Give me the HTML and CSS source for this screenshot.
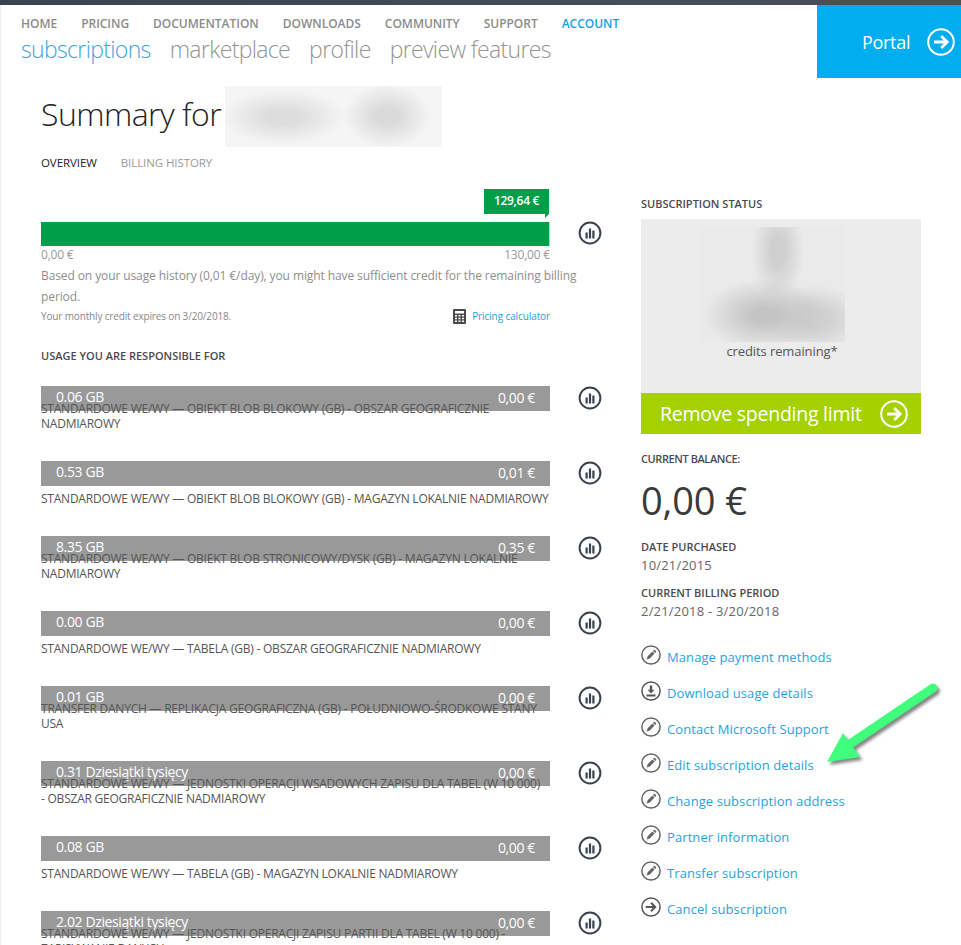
FILE: index.html
```html
<!DOCTYPE html>
<html lang="en">
<head>
<meta charset="utf-8">
<title>Summary</title>
<link rel="stylesheet" href="styles.css">
</head>
<body>
<svg class="defs" width="0" height="0" aria-hidden="true">
  <symbol id="i-chart" viewBox="0 0 24 24">
    <circle cx="12" cy="12" r="10.4" fill="none" stroke="#394250" stroke-width="2"/>
    <path d="M7.5 11.5h2.2v6H7.500zM10.900 7.500h2.200v10h-2.200zM14.300 9.500h2.200v8h-2.200z" fill="#394250"/>
  </symbol>
  <symbol id="i-pencil" viewBox="0 0 20 20">
    <circle cx="10" cy="10" r="9.100" fill="none" stroke="#666" stroke-width="1.500"/>
    <path d="M5.600 14.400l1-3.200 4.800-4.800 2.200 2.200-4.800 4.800zM12 5.800l.8-.8a.8.8 0 0 1 1.100 0l1.100 1.100a.8.8 0 0 1 0 1.100l-.8.800z" fill="#666"/>
  </symbol>
  <symbol id="i-down" viewBox="0 0 20 20">
    <circle cx="10" cy="10" r="9.100" fill="none" stroke="#555" stroke-width="1.500"/>
    <path d="M8.800 4.500h2.400v4.300h2.300L10 12.500 6.500 8.800h2.300zM5.500 13.600h9v1.800h-9z" fill="#555"/>
  </symbol>
  <symbol id="i-go" viewBox="0 0 20 20">
    <circle cx="10" cy="10" r="9.100" fill="none" stroke="#555" stroke-width="1.500"/>
    <path d="M4.800 10h9M10 5.800l4.200 4.200-4.200 4.200" fill="none" stroke="#555" stroke-width="2"/>
  </symbol>
  <symbol id="i-go-white" viewBox="0 0 28 28">
    <circle cx="14" cy="14" r="12.800" fill="none" stroke="#fff" stroke-width="2"/>
    <path d="M7 14h13M14.200 8l6 6-6 6" fill="none" stroke="#fff" stroke-width="2.800"/>
  </symbol>
</svg>

<div class="topbar"></div>

<header class="header">
  <div class="nav-wrap">
    <nav class="nav">
      <a>HOME</a><a>PRICING</a><a>DOCUMENTATION</a><a>DOWNLOADS</a><a>COMMUNITY</a><a>SUPPORT</a><a class="on">ACCOUNT</a>
    </nav>
    <nav class="subnav">
      <a class="on">subscriptions</a><a>marketplace</a><a>profile</a><a>preview features</a>
    </nav>
  </div>
  <a class="portal"><span>Portal</span><svg class="go-white"><use href="#i-go-white"/></svg></a>
</header>

<main class="main">
  <div class="title">
    <h1>Summary for</h1>
    <div class="blur-name"><i></i></div>
  </div>
  <div class="tabs"><a class="on">OVERVIEW</a><a>BILLING HISTORY</a></div>

  <div class="columns">
    <section class="left">
      <div class="flag">129,64 €</div>
      <div class="gauge-row">
        <div class="gauge"></div>
        <svg class="chart"><use href="#i-chart"/></svg>
      </div>
      <div class="scale"><span>0,00 €</span><span>130,00 €</span></div>
      <p class="usage-note">Based on your usage history (0,01 €/day), you might have sufficient credit for the remaining billing period.</p>
      <div class="foot">
        <span class="expires">Your monthly credit expires on 3/20/2018.</span>
        <a class="calc">
          <svg class="calc-icon" viewBox="0 0 13 15"><rect width="13" height="15" rx="1" fill="#4a4a4a"/><path d="M2 2h9v2.500H2zM2 6h2v1.500H2zM5.500 6h2v1.500h-2zM9 6h2v1.500H9zM2 8.800h2v1.500H2zM5.500 8.800h2v1.500h-2zM9 8.800h2v1.500H9zM2 11.600h2v1.500H2zM5.500 11.600h2v1.500h-2zM9 11.600h2v1.500H9z" fill="#fff"/></svg>
          <span>Pricing calculator</span>
        </a>
      </div>
      <h2 class="label usage-head">USAGE YOU ARE RESPONSIBLE FOR</h2>

      <div class="rows">
        <div class="row">
          <div class="row-main">
            <div class="bar"><span>0.06 GB</span><span class="cost">0,00 €</span></div>
            <div class="desc"><p>STANDARDOWE WE/WY — OBIEKT BLOB BLOKOWY (GB) - OBSZAR GEOGRAFICZNIE NADMIAROWY</p></div>
          </div>
          <svg class="chart"><use href="#i-chart"/></svg>
        </div>
        <div class="row">
          <div class="row-main">
            <div class="bar"><span>0.53 GB</span><span class="cost">0,01 €</span></div>
            <div class="desc"><p>STANDARDOWE WE/WY — OBIEKT BLOB BLOKOWY (GB) - MAGAZYN LOKALNIE NADMIAROWY</p></div>
          </div>
          <svg class="chart"><use href="#i-chart"/></svg>
        </div>
        <div class="row">
          <div class="row-main">
            <div class="bar"><span>8.35 GB</span><span class="cost">0,35 €</span></div>
            <div class="desc"><p>STANDARDOWE WE/WY — OBIEKT BLOB STRONICOWY/DYSK (GB) - MAGAZYN LOKALNIE NADMIAROWY</p></div>
          </div>
          <svg class="chart"><use href="#i-chart"/></svg>
        </div>
        <div class="row">
          <div class="row-main">
            <div class="bar"><span>0.00 GB</span><span class="cost">0,00 €</span></div>
            <div class="desc"><p>STANDARDOWE WE/WY — TABELA (GB) - OBSZAR GEOGRAFICZNIE NADMIAROWY</p></div>
          </div>
          <svg class="chart"><use href="#i-chart"/></svg>
        </div>
        <div class="row">
          <div class="row-main">
            <div class="bar"><span>0.01 GB</span><span class="cost">0,00 €</span></div>
            <div class="desc"><p>TRANSFER DANYCH — REPLIKACJA GEOGRAFICZNA (GB) - POŁUDNIOWO-ŚRODKOWE STANY USA</p></div>
          </div>
          <svg class="chart"><use href="#i-chart"/></svg>
        </div>
        <div class="row">
          <div class="row-main">
            <div class="bar"><span>0.31 Dziesiątki tysięcy</span><span class="cost">0,00 €</span></div>
            <div class="desc"><p>STANDARDOWE WE/WY — JEDNOSTKI OPERACJI WSADOWYCH ZAPISU DLA TABEL (W 10 000)<br>- OBSZAR GEOGRAFICZNIE NADMIAROWY</p></div>
          </div>
          <svg class="chart"><use href="#i-chart"/></svg>
        </div>
        <div class="row">
          <div class="row-main">
            <div class="bar"><span>0.08 GB</span><span class="cost">0,00 €</span></div>
            <div class="desc"><p>STANDARDOWE WE/WY — TABELA (GB) - MAGAZYN LOKALNIE NADMIAROWY</p></div>
          </div>
          <svg class="chart"><use href="#i-chart"/></svg>
        </div>
        <div class="row">
          <div class="row-main">
            <div class="bar"><span>2.02 Dziesiątki tysięcy</span><span class="cost">0,00 €</span></div>
            <div class="desc"><p>STANDARDOWE WE/WY — JEDNOSTKI OPERACJI ZAPISU PARTII DLA TABEL (W 10 000) - ZAPISYWANIE DANYCH</p></div>
          </div>
          <svg class="chart"><use href="#i-chart"/></svg>
        </div>
      </div>
    </section>

    <aside class="right">
      <h2 class="label">SUBSCRIPTION STATUS</h2>
      <div class="status">
        <div class="blur-credit"><i></i></div>
        <div class="credits">credits remaining*</div>
      </div>
      <a class="remove"><span>Remove spending limit</span><svg class="go-white"><use href="#i-go-white"/></svg></a>

      <h2 class="label balance-head">CURRENT BALANCE:</h2>
      <div class="amount">0,00 €</div>
      <h2 class="label purchased-head">DATE PURCHASED</h2>
      <div class="value">10/21/2015</div>
      <h2 class="label period-head">CURRENT BILLING PERIOD</h2>
      <div class="value">2/21/2018 - 3/20/2018</div>

      <ul class="actions">
        <li><svg><use href="#i-pencil"/></svg><a>Manage payment methods</a></li>
        <li><svg><use href="#i-down"/></svg><a>Download usage details</a></li>
        <li><svg><use href="#i-pencil"/></svg><a>Contact Microsoft Support</a></li>
        <li><svg><use href="#i-pencil"/></svg><a>Edit subscription details</a></li>
        <li><svg><use href="#i-pencil"/></svg><a>Change subscription address</a></li>
        <li><svg><use href="#i-pencil"/></svg><a>Partner information</a></li>
        <li><svg><use href="#i-pencil"/></svg><a>Transfer subscription</a></li>
        <li><svg><use href="#i-go"/></svg><a>Cancel subscription</a></li>
      </ul>
    </aside>
  </div>
</main>

<svg class="callout" viewBox="0 0 130 100" aria-hidden="true">
  <defs><filter id="soft" x="-20%" y="-20%" width="140%" height="140%"><feGaussianBlur stdDeviation="1.600"/></filter></defs>
  <g transform="translate(2.500 3)" filter="url(#soft)" fill="#555" stroke="#555" opacity=".7">
    <path d="M113 13 L30 69" fill="none" stroke-width="9" stroke-linecap="round"/>
    <path d="M23 58 L40 82 L7 87z" stroke="none"/>
  </g>
  <path d="M113 13 L30 69" fill="none" stroke="#40ff7c" stroke-width="9" stroke-linecap="round"/>
  <path d="M23 58 L40 82 L7 87z" fill="#40ff7c"/>
</svg>
</body>
</html>
```

FILE: styles.css
```css
* { box-sizing: border-box; }
html, body { margin: 0; padding: 0; height: 945px; overflow: hidden; }
body {
  position: relative;
  background: #fff;
  box-shadow: inset 1px 0 #efefef;
  font-family: "Open Sans", "Noto Sans", sans-serif;
  color: #555;
}
.defs { position: absolute; }
h1, h2, p, ul { margin: 0; padding: 0; }
.topbar { height: 5px; background: linear-gradient(90deg, #3c4350, #4b505c); }

/* header */
.header { display: flex; justify-content: space-between; height: 73px; }
.nav-wrap { padding: 11px 0 0 21px; }
.nav { display: flex; gap: 24px; font-size: 12px; line-height: 16px; font-weight: 600; color: #8b8b8b; letter-spacing: -.02px; }
.nav .on { color: #0ea5e3; }
.subnav { display: flex; gap: 19px; margin-top: 2px; font-size: 23px; line-height: 30px; font-weight: 300; color: #949494; letter-spacing: -.65px; }
.subnav .on { color: #3fa3dc; }
.portal { display: flex; align-items: center; width: 144px; padding-left: 45px; background: #00aeef; color: #fff; font-size: 18px; letter-spacing: -.3px; }
.portal span { width: 65px; }
.go-white { width: 28px; height: 28px; flex: none; }

/* main */
.main { padding-left: 41px; }
.title { display: flex; gap: 4px; margin-top: 8px; height: 61px; }
.title h1 { font-size: 32px; line-height: 55px; font-weight: 300; color: #222; letter-spacing: -.55px; width: 180px; white-space: nowrap; }
.blur-name { width: 217px; height: 61px; overflow: hidden; background: #f5f5f5; }
.blur-name i {
  display: block; height: 100%;
  background:
    radial-gradient(ellipse 62px 28px at 58px 31px, #dddddd 0, #dddddd 25%, #dddddd00 100%),
    radial-gradient(ellipse 44px 32px at 162px 30px, #dadada 0, #dadada 25%, #dadada00 100%);
}
.tabs { display: flex; gap: 24px; margin-top: 8px; font-size: 11.500px; line-height: 16px; color: #999; letter-spacing: -.08px; }
.tabs .on { color: #222; }
.columns { display: flex; gap: 39px; margin-top: 18px; }
.left { width: 561px; flex: none; }
.right { width: 280px; flex: none; padding-top: 8px; }
.label { font-size: 11px; line-height: 14px; font-weight: 600; color: #4a4a52; }

/* gauge */
.flag { position: relative; width: 65px; height: 25px; margin: 0 0 8px 443px; background: #009e49; color: #fff; font-size: 12px; font-weight: 600; line-height: 23px; text-align: center; letter-spacing: -.3px; }
.flag::after { content: ""; position: absolute; right: 0; top: 25px; border-style: solid; border-width: 0 0 4px 4px; border-color: transparent transparent transparent #009e49; }
.gauge-row { display: flex; justify-content: space-between; }
.gauge { width: 509px; height: 24px; background: #009e49; border-right: 1px solid #c9c9c9; }
.chart { width: 24px; height: 24px; flex: none; }
.gauge-row .chart { margin-top: -1px; }
.scale { display: flex; justify-content: space-between; width: 509px; margin-top: 1px; font-size: 12px; line-height: 16px; color: #999; letter-spacing: -.2px; }
.usage-note { width: 540px; margin-top: 2px; font-size: 12px; line-height: 21px; color: #8e8e8e; letter-spacing: -.1px; }
.foot { display: flex; justify-content: space-between; align-items: center; width: 509px; height: 18px; }
.expires { font-size: 10px; color: #888; letter-spacing: -.15px; }
.calc { display: flex; align-items: center; gap: 6px; font-size: 10px; color: #1ba1e2; letter-spacing: -.1px; }
.calc-icon { width: 13px; height: 15px; }
.usage-head { margin-top: 24px; }

/* usage rows */
.rows { margin-top: 23px; }
.row { display: flex; justify-content: space-between; height: 75px; }
.row-main { width: 509px; }
.bar { display: flex; justify-content: space-between; height: 25px; padding: 0 15px; background: #999; color: #fff; font-size: 14px; line-height: 22px; letter-spacing: -.38px; }
.cost { padding-top: 1px; }
.desc { display: flex; align-items: flex-end; height: 20px; }
.desc p { font-size: 12px; line-height: 15px; color: #555; letter-spacing: -.23px; }

/* status */
.status { height: 174px; margin-top: 8px; padding-top: 8px; background: #ececec; }
.blur-credit { width: 145px; height: 115px; margin-left: 59px; overflow: hidden; background: #eaeaea; }
.blur-credit i {
  display: block; height: 100%;
  background:
    radial-gradient(ellipse 62px 36px at 65px 88px, #c4c4c4 0, #c4c4c4 20%, #c4c4c400 100%),
    radial-gradient(ellipse 50px 34px at 115px 92px, #d0d0d0 0, #d0d0d0 30%, #d0d0d000 100%),
    radial-gradient(ellipse 26px 52px at 78px 24px, #cfcfcf 0, #cfcfcf 25%, #cfcfcf00 100%);
}
.credits { padding-left: 2px; font-size: 13px; line-height: 18px; text-align: center; color: #555; letter-spacing: -.1px; }
.remove { display: flex; align-items: center; justify-content: space-between; height: 41px; padding: 0 13px 0 19px; background: #a6d100; color: #fff; font-size: 19.500px; letter-spacing: -.25px; }
.balance-head { margin-top: 18px; letter-spacing: -.42px; }
.amount { margin-top: 12px; font-size: 38px; line-height: 44px; color: #3a3a3a; letter-spacing: -.15px; }
.purchased-head { margin-top: 18px; }
.value { margin-top: 2px; font-size: 13px; line-height: 18px; color: #666; letter-spacing: .2px; }
.period-head { margin-top: 12px; }

/* actions */
.actions { list-style: none; margin-top: 19px; }
.actions li { display: flex; align-items: center; gap: 6px; height: 36px; }
.actions svg { width: 20px; height: 20px; flex: none; margin-bottom: 4px; }
.actions a { font-size: 13px; color: #27a3dd; letter-spacing: .09px; }

/* annotation arrow laid over the page */
.callout { position: absolute; left: 820px; top: 675px; width: 130px; height: 100px; }
```
